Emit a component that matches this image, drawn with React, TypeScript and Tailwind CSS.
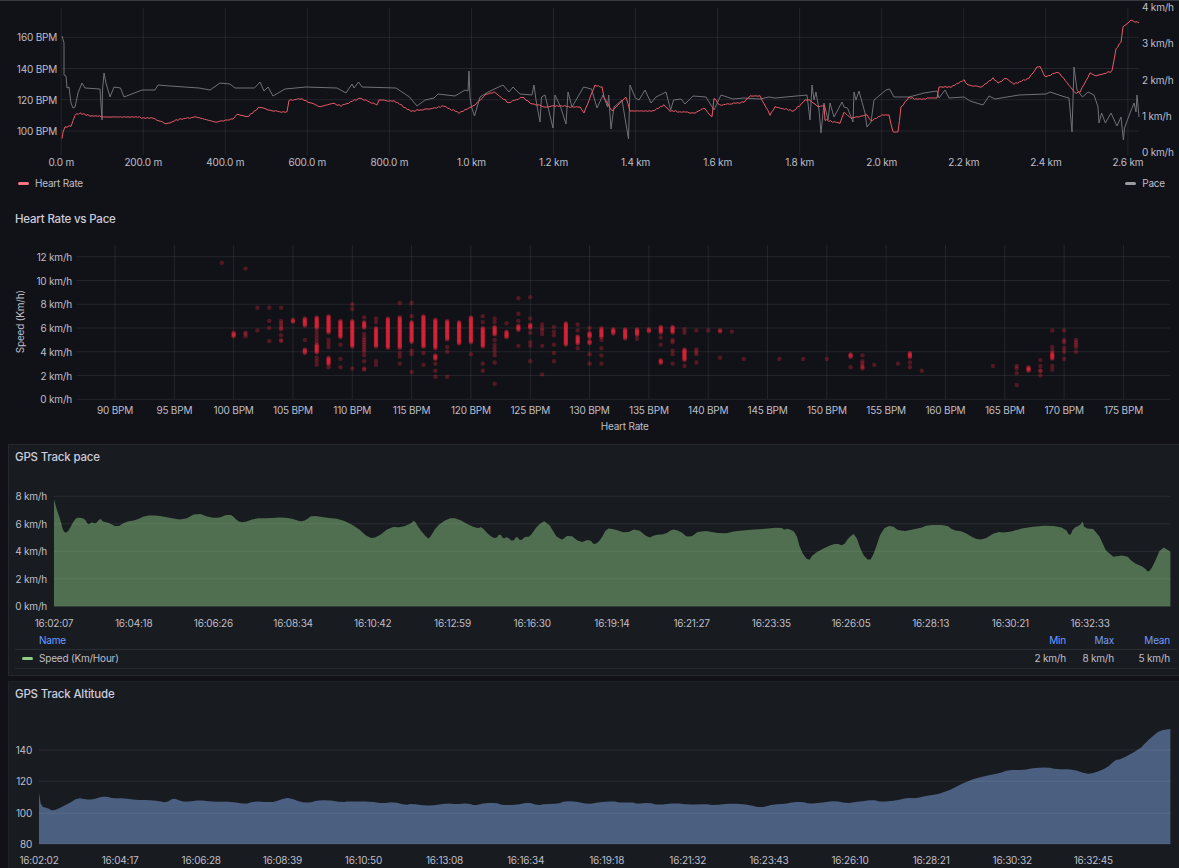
const RED_LINE =
  "62,139 63,132 65,127 71,126 75,115 80,113 92,116 111,117 130,117 153,118 166,124 180,119 195,117 216,122 233,119 237,114 247,117 260,107 272,111 287,112 289,100 302,99 320,107 333,103 341,106 360,98 377,105 379,100 394,101 411,111 429,109 444,106 459,113 475,105 486,94 494,92 509,103 522,97 532,104 540,105 543,107 555,106 580,107 584,113 595,85 602,87 604,97 612,111 626,97 630,111 653,111 664,105 670,111 695,113 704,108 712,117 714,98 719.5,105 744,102 750,96 760,96 770,115 775,107 794,111 805,100 809,100 819,107 824,105 825,120 840,123 844,112 851,118 867,115 871,121 882,115 889,115 893,132 898,132 901,107 909,97 916,99 937,98 939,87 951,87 964,80 968,85 981,87 993,78 998,83 1006,78 1014,84 1029,78 1037,67 1040,66 1045,77 1058,72 1065,80 1075,93 1080,92 1090,73 1096,76 1112,71 1116,49 1121,42 1123,27 1131,20 1139,23";

const GREY_LINE =
  "62,36 64,43 64,75 66,76 67,88 69,87 71,103 73,108 75,107 78,93 82,83 85,88 100,89 102,120 102.5,90 104,73 106,83 110,97 114,87 120.5,88 124,97 142,90 155,90 158,85 170,86 199,88 210,90 220,83 230,84 235,88 254.5,88 260,82 264,91 268,87 273,96 285,89 306,87 337,88 346,93 352,84 354,88 358.6,82 362,87 396,88 409.5,97 417,106 425,100 434,98 438,94 455,96 465,90 468,91 469,71 470,97 471.5,107 474.5,116 480,97 488,92 503,85 509,92 513,87 520,94 532,95 534,85 536,100 540,122 541.5,97 545,95 553,128 555,95 560.6,107 566,124 568,92 572,107 583.6,87 591.5,89 597,108 603,95 607.5,107 608.7,95 611,129 614,107 622,100 628.5,139 630,85 635.4,98 639,100 645,90 651,103 656,97 666,92 670.6,110 673.6,100 681,99 685,104 693,96 706,97 714,110 721,95 733,99 744,98 760,99 769,97 775,98 807,95 810,120 812,85 814,100 816,92 819,110 821,133 824,103 828,120 830,103 834,117 842,102 844,107 847.5,108 853,122 854,92 856,100 859,91 865,113 867,127 871,122 874,100 886,90 889.5,89 894,97 909,97 924,93 937,91 939,98 945,90 949,98 964,97 970,101 983,105 989,96 995,99 1019,95 1046,94 1050,92 1065,97 1069,98 1072,132 1074,67 1077,90 1082.5,97 1088,92 1094,95 1098,107 1099,123 1101.6,113 1105.4,123 1111,113 1117,126 1121,117 1123.4,140 1124.5,128 1130,113 1134,103 1136,112 1137,95 1139,117";

const PACE_TOP =
  "54,499.3 57.4,511.7 60.5,520 63,530.7 66,533 69,530 74.6,519.3 78.5,517.3 85,519 88,525 92,522 95.7,524 100,518.3 103,521.7 109,522.7 116.7,527.3 126,521.7 136,520 145.4,515.7 157,515.3 168.4,517.7 183.7,520 197,512.7 210.5,517.7 220,517.7 225.8,514.7 232.3,515.3 237.3,521 244,522.7 254.5,518.3 268,518.3 283,517.3 294.7,519.3 300.4,521.7 306,520 312,515.3 325.3,517.7 340.6,519 356,526.7 369.3,538.3 377,537.3 390.4,527 401.8,527.3 411.4,523.3 414,520 419,528.3 427.9,539 430.5,536.7 436.3,526.7 447.8,518.3 457.3,518.3 470.7,526 478.4,528.3 481.4,526.7 489,535 495.6,539 500.2,533.3 503.2,539 507,536.7 512.8,541.7 516.6,536 520.5,541 525,536.7 530,536.7 537.7,525 546.5,520 559.5,541.7 569.5,534 580,542.7 589.6,539.3 594.5,545.3 601,539.3 606.7,528.3 614.4,529.3 625.9,533.3 636.6,528.3 648.8,538.3 654.5,535 666,534 671.7,529.3 679.4,530.7 689,538.3 700.4,530 723.3,534 736.7,530.7 759.6,529.3 781.4,527.3 784,530 788,528.3 796,532.7 800.5,550 808.5,561.7 813,554 828.4,546 836.8,543.3 843,546 849.4,536.7 855,533.3 862,553.3 869.3,561.7 874,553.3 882,529.3 891.4,525 900,531.7 920,528.3 927.7,525 946.8,525 952.6,530 964,531.7 973.6,538.3 983,540 996.5,531.7 1006,532.7 1027,527.3 1050,525.3 1065.3,528.3 1070,536.7 1073,528.3 1080.6,525 1082.5,520.7 1084.4,528.3 1096,529.3 1109,557.3 1126.4,555 1132,561.7 1145.5,568.3 1148,572.7 1153,566 1161.6,546 1170.4,551.7";

const ALTITUDE_TOP =
  "39,793.3 41.3,806.7 47.8,808 52.8,811 61.2,807.3 68.9,803.3 77.7,798 86,799.3 92,799.7 101.4,796.7 107,796.7 113,798.3 124.4,798.3 135.9,800 147.3,800 158.8,801 166.5,802.7 173,798 181.8,801.3 189.4,801.7 199,800 212.4,801.7 233.4,801.7 245,804.3 254.5,801.3 268,802.3 275,801.7 285,798 290.9,798.3 300.4,802 310,802.7 315.7,800.7 327,800 342.5,802.3 348,801.3 371,801.7 382.7,803.3 394,802 405.7,805 411.4,803.7 426.7,805.7 436.3,805 447.8,803.3 455.4,804.3 468.8,803.3 474.5,805.7 484,803 497.5,803 501.3,805 516.6,805 528,802.3 537.7,805.3 545.3,804 558.7,803.7 564.5,801 577.9,801.7 587.6,804.3 599,802.3 612.5,801.3 622,802.7 631.6,802.3 637.3,803.7 648.8,802.7 658.3,805 675.5,803 689,804.7 706,804 713.7,805.3 732.8,803.3 750,805 759.6,807.7 775,804.3 784.4,804 794,802 803.5,802 809.3,803.7 820.7,802.7 836,800.7 845.6,803.3 859,801.7 872.3,799.7 881.9,802 897,800.3 906.7,798 916.3,798.3 924,796.3 943,793.3 969.8,780 985,776 1000.3,773 1008,770 1025,770 1031,768.3 1048,767.3 1055.7,769.3 1073,769.3 1086.3,774 1094,773 1107.3,767.7 1115,760 1120.7,759.3 1139.8,749 1145.5,742.7 1157,732.3 1162.7,730 1170.4,729";

// bpm: speeds, "a-b" is a dense run of samples
const SCATTER: [number, string][] = [
  [99, "11.5"],
  [100, "5.6-5.3"],
  [101, "11 5.6 5.5 5.3"],
  [102, "7.7 5.8"],
  [103, "7.7 6.6 6 4.9"],
  [104, "7.7 6.6 6.4 6.2 6 5.9 5.4 5 4.9"],
  [105, "6.7-6.5"],
  [106, "6.8-6.2 5 4.2-3.9"],
  [107, "6.9-6 5.7 5.4 5.1 4.8 4.6-3.9 3.5 3.2 2.9"],
  [108, "7-5.6 5 4.7 4.4 3.5-2.9 2.7"],
  [109, "6.6-5.2 4.6 3.4 2.7"],
  [110, "8 7.6 6.6-4.4 2.6"],
  [111, "6.9 6.5-6 5.5 5.2 5 4.8 4.6 4.4 4.2 4 3.7 3.2 2.6 2.5"],
  [112, "6.8 6.5 6-4.4 3.2 2.9"],
  [113, "6.8-4.3"],
  [114, "8.1 6.9-4.3 3.9 3.6 3"],
  [115, "8.1 7 6.5-4.8 4.1 3.8 2.3"],
  [116, "7-4.4 3.9 2.9"],
  [117, "6.7-4.3 3.7-3.4 3 2.4 1.9"],
  [118, "6.6-5 4.4 4 1.9"],
  [119, "6.5-4.7"],
  [120, "6.9-4.8 3.8"],
  [121, "7 6.5 6-4.4 3 2.4"],
  [122, "6.8 6.5 6.1-5.4 5 4.6 4.3 4 3.7 3.1 1.3"],
  [123, "6.4 5.7-5.2"],
  [124, "8.5 7.2 6.6 6.2-5.8 4.5"],
  [125, "8.6 6.8 6.3-6 5.6 4.8 4.5 3.2"],
  [126, "6.3 6 5.8 5.5 4.5 2.1"],
  [127, "6.1 5.7 5.4 4.6 3.9 3.2"],
  [128, "6.4-4.6"],
  [129, "6.3 5.8 5.3-4.7 4.3"],
  [130, "6 5.6-5.2 4.9-4.7 3.8 3"],
  [131, "6 5.9-5.2 5 4.3 3.7 3"],
  [132, "5.9-5.5"],
  [133, "5.9-5.1"],
  [134, "5.9-5.4 5.1"],
  [135, "5.9-5.7"],
  [136, "6.1-5.6 5.2 4.6 3.3-3"],
  [137, "6.1-5.6 5 4.8 4.1 3.8 3"],
  [138, "5.9 5.6 4.2-3.3 2.8"],
  [139, "5.8 4.2 4 3.8 3.1"],
  [140, "5.8"],
  [141, "5.8 5.8 5.7 3.5"],
  [142, "5.7"],
  [143, "3.4"],
  [146, "3.4"],
  [148, "3.4"],
  [150, "3.4"],
  [152, "3.8-3.5 2.7"],
  [153, "3.7 3.2 3 2.8 2.7 2.6"],
  [154, "2.9"],
  [156, "3"],
  [157, "3.9-3.5 3.1 2.7"],
  [158, "2.4"],
  [164, "2.8"],
  [166, "2.8 2.6 2.2 1.2"],
  [167, "2.7-2.4"],
  [168, "3.3 2.8 2.4 2.4 2"],
  [169, "5.8 4.4 4.1 3.9-3.4 2.8 2.5"],
  [170, "5.8 5 4.8 4.3 4 3.4"],
  [171, "5 4.8 4.6 4.4 4"],
];

const scatterDots = SCATTER.flatMap(([bpm, spec]) =>
  spec.split(" ").flatMap((part) => {
    const [a, b] = part.split("-").map(Number);
    if (b === undefined) return [{ bpm, v: a }];
    const out = [];
    for (let v = a; v >= b; v -= 0.06) out.push({ bpm, v });
    return out;
  })
);

const parse = (points: string) => points.split(" ").map((p) => p.split(",").map(Number));

// tiny stair steps so the heart rate doesn't look like a smooth polyline
function stepped(points: string) {
  const pts = parse(points);
  const out: string[] = [];
  pts.forEach(([x, y], i) => {
    const next = pts[i + 1];
    if (!next) {
      out.push(`${x},${y}`);
      return;
    }
    const n = Math.max(1, Math.round((next[0] - x) / 2));
    for (let k = 0; k < n; k++) {
      const px = x + ((next[0] - x) * k) / n;
      const py = y + ((next[1] - y) * k) / n;
      out.push(`${px.toFixed(1)},${(Math.round(py) + Math.sin(px * 1.7) * 0.4).toFixed(1)}`);
    }
  });
  return out.join(" ");
}

// one pass of corner cutting, the area charts are smooth in grafana
function smoothArea(points: string, baseline: number) {
  const pts = parse(points);
  const cut = [pts[0]];
  for (let i = 0; i < pts.length - 1; i++) {
    const [ax, ay] = pts[i];
    const [bx, by] = pts[i + 1];
    cut.push([ax * 0.75 + bx * 0.25, ay * 0.75 + by * 0.25], [ax * 0.25 + bx * 0.75, ay * 0.25 + by * 0.75]);
  }
  cut.push(pts[pts.length - 1]);
  const first = cut[0][0];
  const last = cut[cut.length - 1][0];
  return [...cut, [last, baseline], [first, baseline]].map((p) => `${p[0].toFixed(1)},${p[1].toFixed(1)}`).join(" ");
}

const LEFT_TICKS = [
  ["160 BPM", 37.3],
  ["140 BPM", 68.5],
  ["120 BPM", 99.7],
  ["100 BPM", 131],
] as const;
const RIGHT_TICKS = [
  ["4 km/h", 7],
  ["3 km/h", 43],
  ["2 km/h", 79.5],
  ["1 km/h", 115.5],
  ["0 km/h", 152],
] as const;
const DIST_TICKS = ["0.0 m", "200.0 m", "400.0 m", "600.0 m", "800.0 m", "1.0 km", "1.2 km", "1.4 km", "1.6 km", "1.8 km", "2.0 km", "2.2 km", "2.4 km", "2.6 km"];
const BPM_TICKS = [90, 95, 100, 105, 110, 115, 120, 125, 130, 135, 140, 145, 150, 155, 160, 165, 170, 175];
const SPEED_TICKS = [12, 10, 8, 6, 4, 2, 0];
const PACE_TIMES = ["16:02:07", "16:04:18", "16:06:26", "16:08:34", "16:10:42", "16:12:59", "16:16:30", "16:19:14", "16:21:27", "16:23:35", "16:26:05", "16:28:13", "16:30:21", "16:32:33"];
const ALT_TIMES = ["16:02:02", "16:04:17", "16:06:28", "16:08:39", "16:10:50", "16:13:08", "16:16:34", "16:19:18", "16:21:32", "16:23:43", "16:26:10", "16:28:21", "16:30:32", "16:32:45"];

const tickClass = "fill-[#bfbfca] text-[10px] tracking-[-0.2px]";
const gridClass = "stroke-[#ccccdc]/10";

function AxisText({ x, y, anchor = "middle", children }: { x: number; y: number; anchor?: "start" | "middle" | "end"; children: string }) {
  return (
    <text x={x} y={y} textAnchor={anchor} dominantBaseline="central" className={tickClass}>
      {children}
    </text>
  );
}

function PanelTitle({ children }: { children: string }) {
  return <h2 className="text-[11.5px] leading-4 font-medium tracking-[-0.2px] text-[#ccccdc]">{children}</h2>;
}

function RunChart() {
  return (
    <svg width={1179} height={171} viewBox="0 1 1179 171" className="block shrink-0">
      {DIST_TICKS.map((_, i) => {
        const x = 61.2 + i * 82.05;
        return <line key={i} x1={x} x2={x} y1={8} y2={155} className={gridClass} />;
      })}
      {LEFT_TICKS.map(([, y]) => (
        <line key={y} x1={61} x2={1139} y1={y} y2={y} className={gridClass} />
      ))}
      <polyline points={GREY_LINE} fill="none" stroke="#707176" strokeWidth={1} />
      <polyline points={stepped(RED_LINE)} fill="none" stroke="#e85a67" strokeWidth={1} />
      {LEFT_TICKS.map(([label, y]) => (
        <AxisText key={label} x={57} y={y} anchor="end">
          {label}
        </AxisText>
      ))}
      {RIGHT_TICKS.map(([label, y]) => (
        <AxisText key={label} x={1142} y={y} anchor="start">
          {label}
        </AxisText>
      ))}
      {DIST_TICKS.map((label, i) => (
        <AxisText key={label} x={61.2 + i * 82.05} y={162}>
          {label}
        </AxisText>
      ))}
    </svg>
  );
}

function ScatterChart() {
  const bx = (bpm: number) => 115 + (bpm - 90) * 11.864;
  const sy = (v: number) => 399.3 - v * 11.88;
  return (
    <svg width={1179} height={205} viewBox="0 232 1179 205" className="block shrink-0">
      {BPM_TICKS.map((b) => (
        <line key={b} x1={bx(b)} x2={bx(b)} y1={245} y2={399} className={gridClass} />
      ))}
      {SPEED_TICKS.map((v) => (
        <line key={v} x1={76.5} x2={1170} y1={sy(v)} y2={sy(v)} className={gridClass} />
      ))}
      {scatterDots.map((d, i) => (
        <circle key={i} cx={bx(d.bpm)} cy={sy(d.v)} r={2.2} fill="#f2273f" fillOpacity={0.3} />
      ))}
      {SPEED_TICKS.map((v) => (
        <AxisText key={v} x={72} y={sy(v)} anchor="end">
          {`${v} km/h`}
        </AxisText>
      ))}
      {BPM_TICKS.map((b) => (
        <AxisText key={b} x={bx(b)} y={409.5}>
          {`${b} BPM`}
        </AxisText>
      ))}
      <AxisText x={624.7} y={425.5}>
        Heart Rate
      </AxisText>
      <text x={20} y={321.7} textAnchor="middle" dominantBaseline="central" transform="rotate(-90 20 321.7)" className={tickClass}>
        Speed (Km/h)
      </text>
    </svg>
  );
}

function PaceChart() {
  const sy = (v: number) => 606.3 - v * 13.75;
  return (
    <svg width={1170} height={166} viewBox="9 465 1170 166" className="block shrink-0">
      <polygon points={smoothArea(PACE_TOP, 606.3)} fill="#506f50" />
      {[8, 6, 4, 2, 0].map((v) => (
        <line key={v} x1={54} x2={1170.4} y1={sy(v)} y2={sy(v)} className={gridClass} />
      ))}
      {[8, 6, 4, 2, 0].map((v) => (
        <AxisText key={v} x={47} y={sy(v)} anchor="end">
          {`${v} km/h`}
        </AxisText>
      ))}
      {PACE_TIMES.map((t, i) => (
        <AxisText key={t} x={54 + i * 79.7} y={622.7}>
          {t}
        </AxisText>
      ))}
    </svg>
  );
}

function AltitudeChart() {
  return (
    <svg width={1170} height={165} viewBox="9 704 1170 165" className="block shrink-0">
      <polygon points={smoothArea(ALTITUDE_TOP, 844)} fill="#4b5f80" />
      {[
        [140, 750],
        [120, 781.3],
        [100, 813.3],
        [80, 844],
      ].map(([v, y]) => (
        <g key={v}>
          <line x1={39} x2={1170.4} y1={y} y2={y} className={gridClass} />
          <AxisText x={32} y={y} anchor="end">
            {String(v)}
          </AxisText>
        </g>
      ))}
      {ALT_TIMES.map((t, i) => (
        <AxisText key={t} x={39 + i * 81.1} y={860}>
          {t}
        </AxisText>
      ))}
    </svg>
  );
}

function LegendItem({ color, label }: { color: string; label: string }) {
  return (
    <div className="flex items-center gap-[6px]">
      <span className={`h-[3px] w-[11px] rounded-full ${color}`} />
      <span>{label}</span>
    </div>
  );
}

export default function App() {
  return (
    <div className="flex h-[868px] w-[1179px] flex-col overflow-hidden bg-[#111217] font-['Inter',sans-serif] text-[10px] tracking-[-0.2px] text-[#bfbfca]">
      <div className="h-px shrink-0 bg-[#3a3b40]" />
      <RunChart />
      <div className="flex h-[22px] shrink-0 items-center justify-between pr-[14px] pl-[18px]">
        <LegendItem color="bg-[#ff7383]" label="Heart Rate" />
        <LegendItem color="bg-[#9a9a9e]" label="Pace" />
      </div>
      <div className="h-[14px] shrink-0" />
      <div className="flex h-[24px] shrink-0 items-start px-[15px] pt-[3px]">
        <PanelTitle>Heart Rate vs Pace</PanelTitle>
      </div>
      <ScatterChart />

      <section className="mt-[7px] ml-2 flex h-[232px] shrink-0 flex-col border border-r-0 border-[#24272c] bg-[#181b1f]">
        <div className="h-[20px] shrink-0 px-[6px] pt-[4px]">
          <PanelTitle>GPS Track pace</PanelTitle>
        </div>
        <PaceChart />
        <table className="mr-[2px] ml-[6px] w-[1162px] table-fixed border-collapse">
          <thead>
            <tr className="h-[18px] border-b border-[#2a2d33] text-[#6e9fff]">
              <th className="pt-px pl-[24px] text-left font-normal">Name</th>
              <th className="w-[48px] pt-px text-right font-normal">Min</th>
              <th className="w-[48px] pt-px text-right font-normal">Max</th>
              <th className="w-[63px] pt-px pr-[7px] text-right font-normal">Mean</th>
            </tr>
          </thead>
          <tbody>
            <tr className="h-[19px] border-b border-[#24272c]">
              <td className="pl-[7px]">
                <LegendItem color="bg-[#8ed184]" label="Speed (Km/Hour)" />
              </td>
              <td className="text-right whitespace-nowrap">2 km/h</td>
              <td className="text-right whitespace-nowrap">8 km/h</td>
              <td className="pr-[7px] text-right whitespace-nowrap">5 km/h</td>
            </tr>
          </tbody>
        </table>
      </section>

      <section className="mt-[5px] ml-2 flex h-[200px] shrink-0 flex-col border border-r-0 border-[#1f2227] bg-[#181b1f]">
        <div className="h-[22px] shrink-0 px-[6px] pt-[4px]">
          <PanelTitle>GPS Track Altitude</PanelTitle>
        </div>
        <AltitudeChart />
      </section>
    </div>
  );
}
